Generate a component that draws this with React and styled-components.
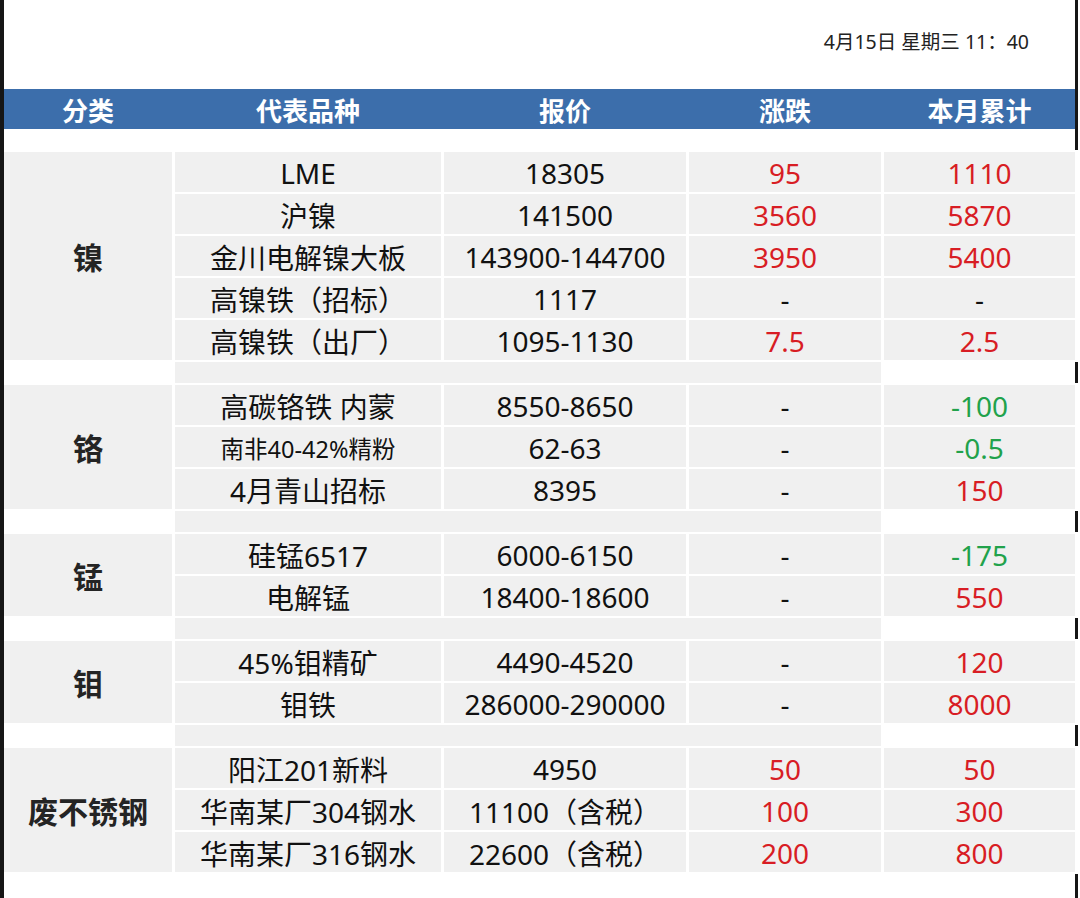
import React from 'react'
import styled, { createGlobalStyle } from 'styled-components'

const GlobalStyle = createGlobalStyle`
  html, body {
    margin: 0;
    padding: 0;
    background: #fff;
  }
  body {
    font-family: "Noto Sans", "Noto Sans CJK SC", sans-serif;
  }
`

const COLS = '168px 266px 242px 192px 191px'

const groups = [
  {
    name: '镍',
    rows: [
      ['LME', '18305', '95', '1110'],
      ['沪镍', '141500', '3560', '5870'],
      ['金川电解镍大板', '143900-144700', '3950', '5400'],
      ['高镍铁（招标）', '1117', '-', '-'],
      ['高镍铁（出厂）', '1095-1130', '7.5', '2.5'],
    ],
  },
  {
    name: '铬',
    rows: [
      ['高碳铬铁 内蒙', '8550-8650', '-', '-100'],
      ['南非40-42%精粉', '62-63', '-', '-0.5', true],
      ['4月青山招标', '8395', '-', '150'],
    ],
  },
  {
    name: '锰',
    rows: [
      ['硅锰6517', '6000-6150', '-', '-175'],
      ['电解锰', '18400-18600', '-', '550'],
    ],
  },
  {
    name: '钼',
    rows: [
      ['45%钼精矿', '4490-4520', '-', '120'],
      ['钼铁', '286000-290000', '-', '8000'],
    ],
  },
  {
    name: '废不锈钢',
    rows: [
      ['阳江201新料', '4950', '50', '50'],
      ['华南某厂304钢水', '11100（含税）', '100', '300'],
      ['华南某厂316钢水', '22600（含税）', '200', '800'],
    ],
  },
]

const toneOf = v => {
  if (v === '-') return 'plain'
  if (v.startsWith('-')) return 'down'
  return 'up'
}

const App = () => {
  return (
    <>
      <GlobalStyle />
      <Page>
        <TopBar>
          <DateText>4月15日 星期三 11：40</DateText>
        </TopBar>
        <HeaderRow>
          <HeadCell>分类</HeadCell>
          <HeadCell>代表品种</HeadCell>
          <HeadCell>报价</HeadCell>
          <HeadCell>涨跌</HeadCell>
          <HeadCell>本月累计</HeadCell>
        </HeaderRow>
        <Table>
          {groups.map((g, gi) => (
            <React.Fragment key={g.name}>
              <CategoryCell $span={g.rows.length}>{g.name}</CategoryCell>
              {g.rows.map(([name, price, change, total, small]) => (
                <React.Fragment key={name}>
                  <Cell $small={small}>{name}</Cell>
                  <Cell>{price}</Cell>
                  <Cell $tone={toneOf(change)}>{change}</Cell>
                  <Cell $tone={toneOf(total)} $edge>{total}</Cell>
                </React.Fragment>
              ))}
              {gi < groups.length - 1 && (
                <>
                  <GapCell />
                  <GapCell $grey $wide />
                  <GapCell />
                </>
              )}
            </React.Fragment>
          ))}
        </Table>
      </Page>
    </>
  )
}

const Page = styled.div`
  width: 1078px;
  height: 898px;
  box-sizing: border-box;
  border-left: 4px solid #161616;
  border-right: 3px solid #161616;
  background: #fff;
`

const TopBar = styled.div`
  height: 89px;
  display: flex;
  align-items: center;
  justify-content: flex-end;
  padding-right: 46px;
  padding-bottom: 8px;
  box-sizing: border-box;
`

const DateText = styled.span`
  font-size: 19.5px;
  color: #222;
`

const HeaderRow = styled.div`
  display: grid;
  grid-template-columns: ${COLS};
  column-gap: 3px;
  height: 40px;
  background: #3c6eab;
`

const HeadCell = styled.div`
  display: flex;
  align-items: center;
  justify-content: center;
  color: #fff;
  font-size: 26px;
  font-weight: 700;
  font-family: "Noto Sans CJK SC", sans-serif;
`

const Table = styled.div`
  display: grid;
  grid-template-columns: ${COLS};
  column-gap: 3px;
  row-gap: 2px;
  margin-top: 23px;
`

const Cell = styled.div`
  height: 40px;
  display: flex;
  align-items: center;
  justify-content: center;
  background: #f0f0f0;
  font-size: ${p => (p.$small ? '23.5px' : '28px')};
  color: ${p => (p.$tone === 'up' ? '#d81d24' : p.$tone === 'down' ? '#21a24b' : '#111')};
  white-space: nowrap;
  padding-top: 1px;
  box-sizing: border-box;
  box-shadow: ${p => (p.$edge ? '3px 0 0 2px #fff' : 'none')};
`

const CategoryCell = styled.div`
  grid-row: span ${p => p.$span};
  display: flex;
  align-items: center;
  justify-content: center;
  background: #f0f0f0;
  font-size: 30px;
  font-weight: 700;
  color: #242424;
  font-family: "Noto Sans CJK SC", sans-serif;
`

const GapCell = styled.div`
  height: 21px;
  background: ${p => (p.$grey ? '#f0f0f0' : '#fff')};
  grid-column: ${p => (p.$wide ? 'span 3' : 'auto')};
`

export default App
